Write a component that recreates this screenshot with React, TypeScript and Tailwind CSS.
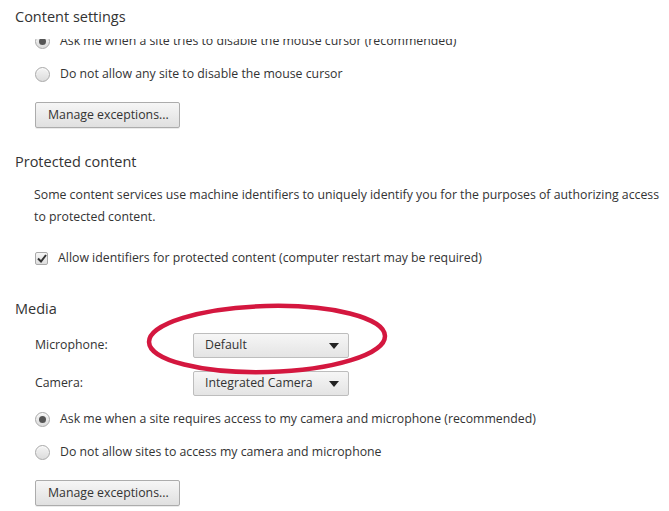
import * as React from "react";

const Radio = ({ checked, label }: { checked?: boolean; label: string }) => (
  <div className="flex h-[33px] items-center pl-[35px]">
    <span className="flex h-[15px] w-[15px] items-center justify-center rounded-full border border-[#a9a9a9] bg-gradient-to-b from-[#f4f4f4] to-[#dcdcdc] shadow-[inset_0_1px_1px_rgba(255,255,255,0.8)]">
      {checked && <span className="h-[7px] w-[7px] rounded-full bg-[#555]" />}
    </span>
    <span className="ml-[10px]">{label}</span>
  </div>
);

const Button = ({ label }: { label: string }) => (
  <button className="flex h-[26px] w-[145px] items-center rounded-[2px] border border-[#acacac] bg-gradient-to-b from-[#f6f6f6] to-[#e0e0e0] pl-[12px] text-[#333] shadow-[0_1px_0_rgba(0,0,0,0.08)]">
    {label}
  </button>
);

const Select = ({ value }: { value: string }) => (
  <div className="flex h-[25px] w-[156px] items-center justify-between rounded-[2px] border border-[#bdbdbd] bg-gradient-to-b from-[#f6f6f6] to-[#e4e4e4] pl-[11px] pr-[9px] text-[#333]">
    <span>{value}</span>
    <svg width="10" height="6" viewBox="0 0 10 6">
      <path d="M0 0 L10 0 L5 6 Z" fill="#222" />
    </svg>
  </div>
);

export default function App() {
  return (
    <main
      className="relative h-[511px] w-[669px] overflow-hidden bg-white text-[12.3px] text-[#333]"
      style={{ fontFamily: '"Open Sans", "Noto Sans", sans-serif' }}
    >
      <div className="flex h-[39px] items-center pb-[5px] pl-[15px] text-[14.5px] text-[#333]">
        Content settings
      </div>

      <div className="h-[472px] overflow-hidden">
        <div className="-mt-[14px]">
          <Radio checked label="Ask me when a site tries to disable the mouse cursor (recommended)" />
          <Radio label="Do not allow any site to disable the mouse cursor" />
          <div className="mt-[11px] pl-[35px]">
            <Button label="Manage exceptions..." />
          </div>

          <div className="mt-[22px] flex h-[24px] items-center pl-[15px] text-[14.5px]">
            Protected content
          </div>
          <p className="mt-[10px] pl-[34px] leading-[22px]">
            Some content services use machine identifiers to uniquely identify you for the purposes of authorizing access
            to protected content.
          </p>
          <div className="mt-[18px] flex h-[24px] items-center pl-[35px]">
            <span className="flex h-[13px] w-[13px] items-center justify-center rounded-[2px] border border-[#a9a9a9] bg-gradient-to-b from-[#f6f6f6] to-[#dedede]">
              <svg width="10" height="9" viewBox="0 0 10 9">
                <path d="M1 4.5 L4 7.5 L9 1" fill="none" stroke="#333" strokeWidth="2" />
              </svg>
            </span>
            <span className="ml-[10px]">Allow identifiers for protected content (computer restart may be required)</span>
          </div>

          <div className="mt-[27px] flex h-[24px] items-center pl-[15px] text-[14.5px]">Media</div>
          <div className="mt-[12px] flex items-center pl-[35px]">
            <span className="w-[158px]">Microphone:</span>
            <Select value="Default" />
          </div>
          <div className="mt-[13px] flex items-center pl-[35px]">
            <span className="w-[158px]">Camera:</span>
            <Select value="Integrated Camera" />
          </div>
          <div className="mt-[7px]">
            <Radio checked label="Ask me when a site requires access to my camera and microphone (recommended)" />
            <Radio label="Do not allow sites to access my camera and microphone" />
          </div>
          <div className="mt-[11px] pl-[35px]">
            <Button label="Manage exceptions..." />
          </div>
        </div>
      </div>

      <svg className="pointer-events-none absolute left-[140px] top-[298px]" width="256" height="84" viewBox="0 0 256 84">
        <ellipse cx="127" cy="41" rx="118" ry="33" fill="none" stroke="#d4173f" strokeWidth="4.5" transform="rotate(-1.5 127 41)" />
      </svg>
    </main>
  );
}
